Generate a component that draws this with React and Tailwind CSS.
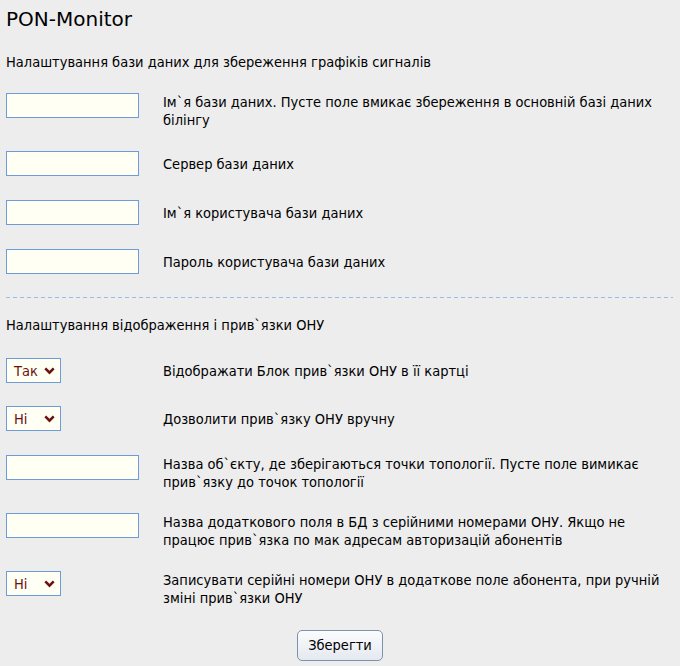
import { useState } from 'react';

const Chevron = () => (
  <svg width="11" height="8" viewBox="0 0 11 8" className="shrink-0">
    <path d="M1.3 1.3 L5.5 5.6 L9.7 1.3" fill="none" stroke="#6b1010" strokeWidth="2.5" />
  </svg>
);

const TextField = ({ value, onChange }) => (
  <input
    type="text"
    value={value}
    onChange={(e) => onChange(e.target.value)}
    className="block w-[133px] h-[25px] bg-[#fffff3] border border-[#6c9dd8] px-1 text-[14px] outline-none"
  />
);

const SelectField = ({ value, onChange }) => (
  <div className="relative w-[55px] h-[25px] bg-[#fffff3] border border-[#6c9dd8] flex items-center justify-between pl-[7px] pr-[5px] text-[#6b1010]">
    <span className="leading-[18px]">{value}</span>
    <Chevron />
    <select
      value={value}
      onChange={(e) => onChange(e.target.value)}
      className="absolute inset-0 opacity-0 cursor-pointer"
    >
      <option>Так</option>
      <option>Ні</option>
    </select>
  </div>
);

const Row = ({ children, label, multi, className }) => (
  <div className={`flex ${multi ? 'items-start' : 'items-center'} ${className}`}>
    <div className="w-[157px] shrink-0">{children}</div>
    <div className="flex-1 leading-[18px] pr-[6px]">{label}</div>
  </div>
);

const App = () => {
  const [fields, setFields] = useState({ dbName: '', server: '', user: '', pass: '', topo: '', serial: '' });
  const [showBlock, setShowBlock] = useState('Так');
  const [manual, setManual] = useState('Ні');
  const [writeSerial, setWriteSerial] = useState('Ні');

  const set = (key) => (v) => setFields({ ...fields, [key]: v });

  return (
    <div className="min-h-screen bg-[#ededed] text-[14.5px] text-black font-['DejaVu_Sans_Condensed','DejaVu_Sans',sans-serif]">
      <div className="pl-[6px] pt-[6px]">
        <h1 className="text-[20px] leading-[26px] font-['DejaVu_Sans',sans-serif]">PON-Monitor</h1>

        {/* Database settings */}
        <div className="mt-[21px] leading-[18px]">Налаштування бази даних для збереження графіків сигналів</div>

        <Row multi className="mt-[22px]" label="Ім`я бази даних. Пусте поле вмикає збереження в основній базі даних білінгу">
          <TextField value={fields.dbName} onChange={set('dbName')} />
        </Row>
        <Row className="mt-[22px]" label="Сервер бази даних">
          <TextField value={fields.server} onChange={set('server')} />
        </Row>
        <Row className="mt-[24px]" label="Ім`я користувача бази даних">
          <TextField value={fields.user} onChange={set('user')} />
        </Row>
        <Row className="mt-[24px]" label="Пароль користувача бази даних">
          <TextField value={fields.pass} onChange={set('pass')} />
        </Row>

        <div className="mt-[23px] mr-[7px] h-px bg-[linear-gradient(to_right,#92bfee_4px,transparent_4px)] bg-[length:7px_1px] bg-repeat-x" />

        {/* ONU binding settings */}
        <div className="mt-[18px] leading-[18px]">Налаштування відображення і прив`язки ОНУ</div>

        <Row className="mt-[24px]" label="Відображати Блок прив`язки ОНУ в її картці">
          <SelectField value={showBlock} onChange={setShowBlock} />
        </Row>
        <Row className="mt-[23px]" label="Дозволити прив`язку ОНУ вручну">
          <SelectField value={manual} onChange={setManual} />
        </Row>
        <Row multi className="mt-[24px]" label="Назва об`єкту, де зберігаються точки топології. Пусте поле вимикає прив`язку до точок топології">
          <TextField value={fields.topo} onChange={set('topo')} />
        </Row>
        <Row multi className="mt-[22px]" label="Назва додаткового поля в БД з серійними номерами ОНУ. Якщо не працює прив`язка по мак адресам авторизацій абонентів">
          <TextField value={fields.serial} onChange={set('serial')} />
        </Row>
        <Row multi className="mt-[22px]" label="Записувати серійні номери ОНУ в додаткове поле абонента, при ручній зміні прив`язки ОНУ">
          <SelectField value={writeSerial} onChange={setWriteSerial} />
        </Row>
      </div>

      <div className="flex justify-center mt-[23px] pb-[5px]">
        <button className="w-[86px] h-[31px] rounded-[5px] border border-[#7d93ad] bg-gradient-to-b from-[#fbfcfd] to-[#e4e9f0]">
          Зберегти
        </button>
      </div>
    </div>
  );
};

export default App;
